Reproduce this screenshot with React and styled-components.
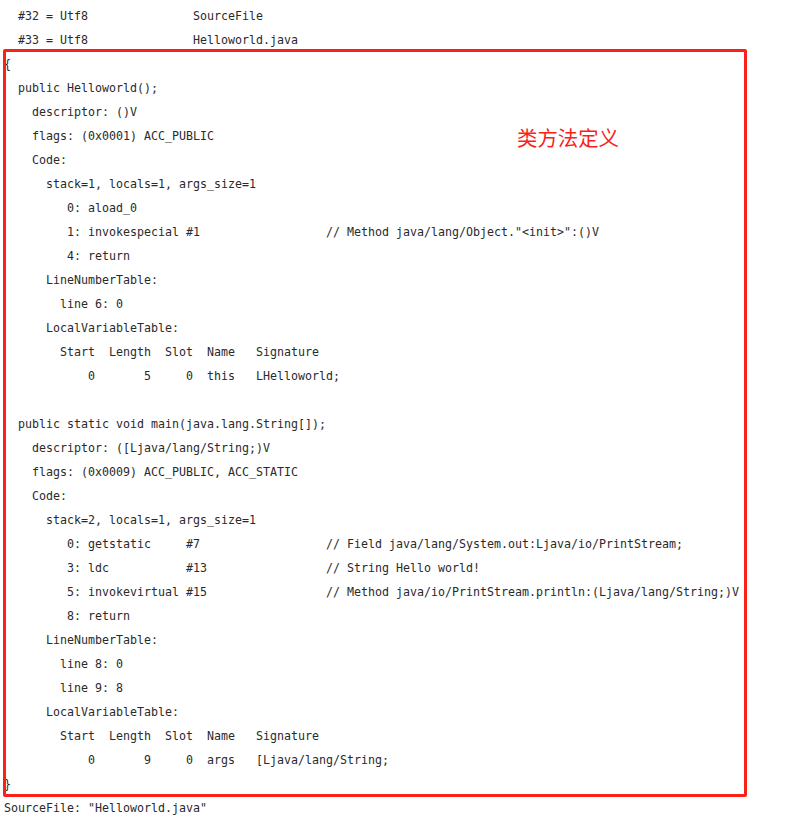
import React from 'react';
import styled, { createGlobalStyle } from 'styled-components';

const GlobalStyle = createGlobalStyle`
  body {
    margin: 0;
    background: #ffffff;
  }
`;

const Listing = styled.div`
  padding: 4px 0 0 4px;
  font-family: 'DejaVu Sans Mono', 'Liberation Mono', monospace;
  font-size: 11.63px;
  color: #2a2a2a;
  white-space: pre;
`;

const Line = styled.div`
  height: 24px;
  line-height: 24px;
`;

const Marked = styled.div`
  position: relative;

  &::before {
    content: '';
    position: absolute;
    top: -3px;
    left: -1px;
    width: 744px;
    bottom: -1px;
    box-sizing: border-box;
    border: 3px solid #fa2118;
    border-radius: 2px;
    pointer-events: none;
  }
`;

const Note = styled.span`
  position: absolute;
  left: 513px;
  top: 71px;
  font-family: 'Noto Sans CJK SC', sans-serif;
  font-size: 20.4px;
  line-height: 28px;
  color: #fa2118;
`;

const head = [
  '  #32 = Utf8               SourceFile',
  '  #33 = Utf8               Helloworld.java',
];

const body = [
  '{',
  '  public Helloworld();',
  '    descriptor: ()V',
  '    flags: (0x0001) ACC_PUBLIC',
  '    Code:',
  '      stack=1, locals=1, args_size=1',
  '         0: aload_0',
  '         1: invokespecial #1                  // Method java/lang/Object."<init>":()V',
  '         4: return',
  '      LineNumberTable:',
  '        line 6: 0',
  '      LocalVariableTable:',
  '        Start  Length  Slot  Name   Signature',
  '            0       5     0  this   LHelloworld;',
  '',
  '  public static void main(java.lang.String[]);',
  '    descriptor: ([Ljava/lang/String;)V',
  '    flags: (0x0009) ACC_PUBLIC, ACC_STATIC',
  '    Code:',
  '      stack=2, locals=1, args_size=1',
  '         0: getstatic     #7                  // Field java/lang/System.out:Ljava/io/PrintStream;',
  '         3: ldc           #13                 // String Hello world!',
  '         5: invokevirtual #15                 // Method java/io/PrintStream.println:(Ljava/lang/String;)V',
  '         8: return',
  '      LineNumberTable:',
  '        line 8: 0',
  '        line 9: 8',
  '      LocalVariableTable:',
  '        Start  Length  Slot  Name   Signature',
  '            0       9     0  args   [Ljava/lang/String;',
  '}',
];

const App = () => {
  return (
    <>
      <GlobalStyle />
      <Listing>
        {head.map((text, i) => (
          <Line key={'h' + i}>{text}</Line>
        ))}
        <Marked>
          {body.map((text, i) => (
            <Line key={'b' + i}>{text}</Line>
          ))}
          <Note>类方法定义</Note>
        </Marked>
        <Line>SourceFile: "Helloworld.java"</Line>
      </Listing>
    </>
  );
};

export default App;
